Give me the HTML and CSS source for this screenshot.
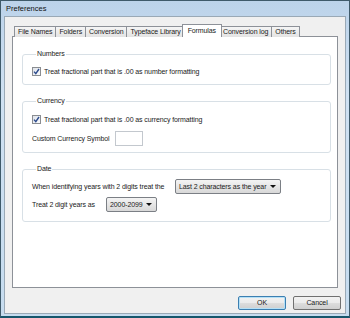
FILE: index.html
```html
<!DOCTYPE html>
<html lang="en">
<head>
  <meta charset="UTF-8">
  <title>Preferences</title>
  <link rel="stylesheet" href="styles.css">
</head>
<body>
  <div class="window">
    <div class="titlebar">Preferences</div>
    <div class="client">
      <div class="tabs">
        <div class="tab">File Names</div>
        <div class="tab">Folders</div>
        <div class="tab">Conversion</div>
        <div class="tab">Typeface Library</div>
        <div class="tab active">Formulas</div>
        <div class="tab">Conversion log</div>
        <div class="tab">Others</div>
      </div>
      <div class="panel">
        <fieldset class="group numbers">
          <legend>Numbers</legend>
          <div class="row">
            <span class="check"><svg width="7" height="7" viewBox="0 0 7 7"><path d="M1 3.6 L2.8 5.6 L6 1" fill="none" stroke="#2b4a8c" stroke-width="1.4"/></svg></span>
            <span>Treat fractional part that is .00 as number formatting</span>
          </div>
        </fieldset>

        <fieldset class="group currency">
          <legend>Currency</legend>
          <div class="row">
            <span class="check"><svg width="7" height="7" viewBox="0 0 7 7"><path d="M1 3.6 L2.8 5.6 L6 1" fill="none" stroke="#2b4a8c" stroke-width="1.4"/></svg></span>
            <span>Treat fractional part that is .00 as currency formatting</span>
          </div>
          <div class="row field-row">
            <span class="field-label">Custom Currency Symbol</span>
            <span class="textbox"></span>
          </div>
        </fieldset>

        <fieldset class="group date">
          <legend>Date</legend>
          <div class="row field-row">
            <span class="date-label">When identifying years with 2 digits treat the</span>
            <span class="combo wide">Last 2 characters as the year <i class="arrow"></i></span>
          </div>
          <div class="row field-row second">
            <span class="years-label">Treat 2 digit years as</span>
            <span class="combo narrow">2000-2099 <i class="arrow"></i></span>
          </div>
        </fieldset>
      </div>
      <div class="buttons">
        <div class="btn default">OK</div>
        <div class="btn">Cancel</div>
      </div>
    </div>
  </div>
</body>
</html>
```

FILE: styles.css
```css
* {
  margin: 0;
  padding: 0;
  box-sizing: border-box;
}

body {
  width: 350px;
  height: 318px;
  font-family: "Liberation Sans", Arial, sans-serif;
  font-size: 7px;
  letter-spacing: -0.1px;
  color: #1a1a1a;
  background-color: #ffffff;
  overflow: hidden;
}

.window {
  width: 350px;
  height: 318px;
  display: flex;
  flex-direction: column;
  background: linear-gradient(#bcd3ea, #cfe1f2 30%, #c6dcef);
  border: 1px solid #3f5a6a;
  border-bottom: 2px solid #16566c;
  padding: 0 3px 2px 3px;
}

.titlebar {
  height: 15px;
  line-height: 15px;
  padding-left: 2px;
  font-size: 7.5px;
  letter-spacing: 0;
  color: #111;
}

.client {
  flex: 1;
  display: flex;
  flex-direction: column;
  background-color: #f0f0f0;
  border: 1px solid #9aa9b6;
  padding: 7px 7px 0 7px;
}

.tabs {
  display: flex;
  align-items: flex-end;
  height: 13px;
  padding-left: 2px;
  position: relative;
  z-index: 1;
}

.tab {
  height: 11px;
  line-height: 10px;
  padding: 0 3px;
  border: 1px solid #8d9198;
  border-bottom: none;
  margin-right: -1px;
  background: linear-gradient(#f5f5f5, #e3e3e3);
  white-space: nowrap;
}

.tab.active {
  height: 13px;
  line-height: 11px;
  background: #ffffff;
  margin-left: -2px;
  margin-right: -3px;
  padding: 0 5px;
  position: relative;
  z-index: 2;
}

.panel {
  height: 252px;
  background-color: #ffffff;
  border: 1px solid #8d9198;
  margin-top: -1px;
  padding: 13px 6px 0 9px;
  display: flex;
  flex-direction: column;
  gap: 12px;
}

.group {
  border: 1px solid #d8e0e6;
  border-radius: 3px;
  padding: 7px 8px 7px 9px;
}

.group legend {
  padding: 0 1px;
  margin-left: 4px;
  line-height: 8px;
}

.group.currency {
  padding-top: 8px;
  padding-bottom: 5px;
}

.group.date {
  padding-top: 5px;
  padding-bottom: 8px;
}

.row {
  display: flex;
  align-items: center;
  height: 12px;
  white-space: nowrap;
}

.field-row {
  height: 17px;
  margin-top: 5px;
}

.date .field-row {
  margin-top: 0;
}

.date .field-row.second {
  margin-top: 1px;
}

.check {
  width: 9px;
  height: 9px;
  margin-right: 3px;
  border: 1px solid #8a8d91;
  background: linear-gradient(135deg, #dfe3ea, #fafbfc);
  display: flex;
  align-items: center;
  justify-content: center;
}

.field-label {
  width: 83px;
}

.textbox {
  width: 28px;
  height: 15px;
  border: 1px solid #c3c8ce;
  background: #ffffff;
}

.date-label {
  width: 143px;
}

.years-label {
  width: 74px;
}

.combo {
  height: 15px;
  display: flex;
  align-items: center;
  justify-content: space-between;
  padding: 0 4px 0 3px;
  border: 1px solid #7b7f85;
  border-radius: 2px;
  background: linear-gradient(#f4f4f4, #e6e6e6 50%, #d8d8d8);
}

.combo.wide {
  width: 106px;
}

.combo.narrow {
  width: 51px;
}

.arrow {
  width: 0;
  height: 0;
  border-left: 3px solid transparent;
  border-right: 3px solid transparent;
  border-top: 3px solid #111;
}

.buttons {
  display: flex;
  justify-content: flex-end;
  gap: 7px;
  padding-top: 8px;
  margin-right: -3px;
}

.btn {
  width: 48px;
  height: 14px;
  line-height: 12px;
  text-align: center;
  border: 1px solid #707070;
  border-radius: 2px;
  background: linear-gradient(#f2f2f2, #ebebeb 50%, #dddddd 51%, #cfcfcf);
}

.btn.default {
  border-color: #3c7fb1;
  box-shadow: inset 0 0 0 1px #b4e0f7;
}
```
